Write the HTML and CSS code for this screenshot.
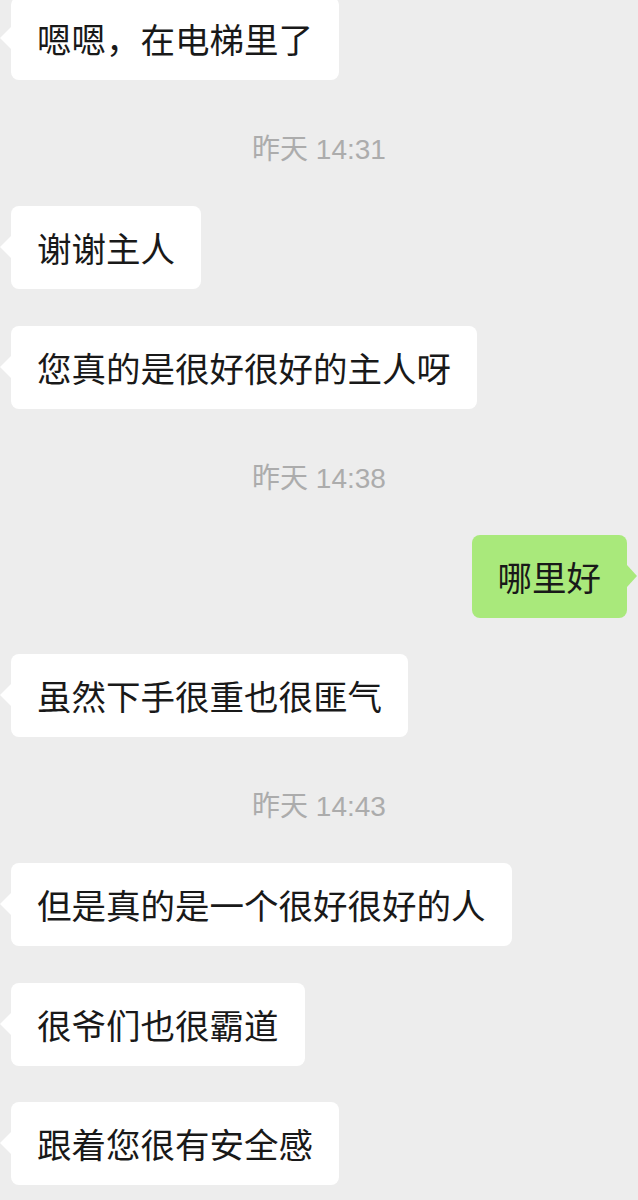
FILE: index.html
```html
<!DOCTYPE html>
<html lang="zh">
  <head>
    <meta charset="UTF-8" />
    <meta name="viewport" content="width=device-width, initial-scale=1.0" />
    <title>聊天记录</title>
    <link rel="stylesheet" href="styles.css">
  </head>
  <body>
    <div class="chat">
      <div class="msg left first"><div class="bubble">嗯嗯，在电梯里了</div></div>
      <div class="time">昨天 14:31</div>
      <div class="msg left"><div class="bubble">谢谢主人</div></div>
      <div class="msg left"><div class="bubble">您真的是很好很好的主人呀</div></div>
      <div class="time">昨天 14:38</div>
      <div class="msg right"><div class="bubble">哪里好</div></div>
      <div class="msg left"><div class="bubble">虽然下手很重也很匪气</div></div>
      <div class="time">昨天 14:43</div>
      <div class="msg left"><div class="bubble">但是真的是一个很好很好的人</div></div>
      <div class="msg left"><div class="bubble">很爷们也很霸道</div></div>
      <div class="msg left"><div class="bubble">跟着您很有安全感</div></div>
    </div>
  </body>
</html>
```

FILE: styles.css
```css
body {
  margin: 0;
  padding: 0;
  background-color: #ededed;
  font-family: "Noto Sans CJK SC", "Noto Sans", sans-serif;
  overflow: hidden;
}
.chat {
  display: flex;
  flex-direction: column;
  padding: 0 11px;
}
.msg {
  display: flex;
  margin-top: 36.5px;
}
.msg.first {
  margin-top: -3px;
}
.msg.right {
  justify-content: flex-end;
}
.time + .msg {
  margin-top: 41px;
}
.bubble {
  position: relative;
  padding: 21px 26px;
  font-size: 34.5px;
  line-height: 41px;
  color: #191919;
  background-color: #fff;
  border-radius: 8px;
}
/* 小三角 */
.left .bubble::before {
  content: "";
  position: absolute;
  left: -11px;
  top: 30px;
  border-top: 11px solid transparent;
  border-bottom: 11px solid transparent;
  border-right: 11px solid #fff;
}
.right .bubble {
  background-color: #a9e97b;
}
.right .bubble::after {
  content: "";
  position: absolute;
  right: -10px;
  top: 30px;
  border-top: 11px solid transparent;
  border-bottom: 11px solid transparent;
  border-left: 10px solid #a9e97b;
}
.time {
  margin-top: 55px;
  text-align: center;
  font-family: "Liberation Sans", "Noto Sans CJK SC", sans-serif;
  font-size: 28px;
  line-height: 30px;
  color: #acacac;
}
```
